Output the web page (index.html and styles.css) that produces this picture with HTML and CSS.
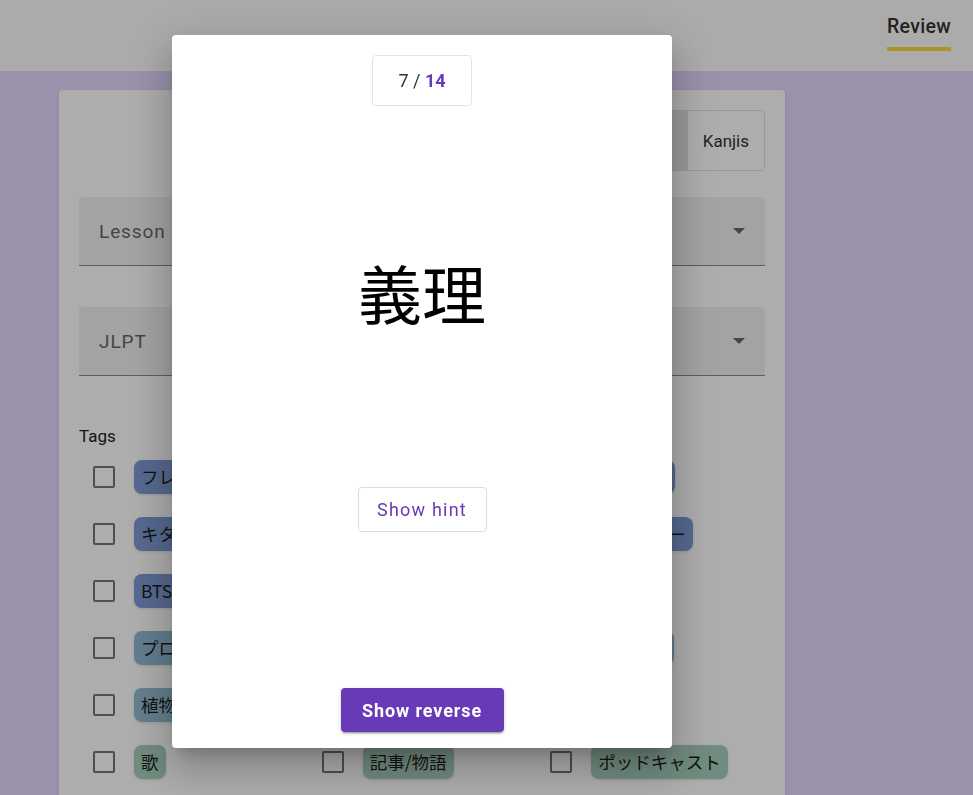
FILE: index.html
```html
<!DOCTYPE html>
<html lang="ja">
<head>
<meta charset="utf-8">
<title>Review</title>
<link rel="stylesheet" href="styles.css">
</head>
<body>
<header class="topbar">
  <nav class="tabs">
    <span class="tab active">Review</span>
  </nav>
</header>
<main class="page">
  <section class="card">
    <div class="toggle-row">
      <div class="toggle-group">
        <button class="toggle selected">Vocabulary</button>
        <button class="toggle">Kanjis</button>
      </div>
    </div>
    <div class="select first">
      <span class="select-label">Lesson</span>
      <span class="caret"></span>
    </div>
    <div class="select">
      <span class="select-label">JLPT</span>
      <span class="caret"></span>
    </div>
    <div class="tags-label">Tags</div>
    <div class="tags">
      <label class="tag"><span class="box"></span><span class="chip blue">フレーズ</span></label>
      <label class="tag"><span class="box"></span><span class="chip blue">食べ物</span></label>
      <label class="tag"><span class="box"></span><span class="chip blue">日常会話</span></label>
      <label class="tag"><span class="box"></span><span class="chip blue">キタニタツヤ</span></label>
      <label class="tag"><span class="box"></span><span class="chip blue">アニメ</span></label>
      <label class="tag"><span class="box"></span><span class="chip blue">カレンダー</span></label>
      <label class="tag"><span class="box"></span><span class="chip blue">BTS</span></label>
      <label class="tag"><span class="box"></span><span class="chip blue">旅行</span></label>
      <label class="tag"><span class="box"></span><span class="chip blue">天気</span></label>
      <label class="tag"><span class="box"></span><span class="chip teal">プログラミング</span></label>
      <label class="tag"><span class="box"></span><span class="chip teal">仕事</span></label>
      <label class="tag"><span class="box"></span><span class="chip teal">ニュース</span></label>
      <label class="tag"><span class="box"></span><span class="chip teal2">植物</span></label>
      <label class="tag"><span class="box"></span><span class="chip teal2">動物</span></label>
      <label class="tag"><span class="box"></span><span class="chip teal2">家族</span></label>
      <label class="tag"><span class="box"></span><span class="chip green">歌</span></label>
      <label class="tag"><span class="box"></span><span class="chip green">記事/物語</span></label>
      <label class="tag"><span class="box"></span><span class="chip green">ポッドキャスト</span></label>
    </div>
  </section>
</main>

<div class="backdrop"></div>
<div class="dialog" role="dialog">
  <div class="counter">7 / <strong>14</strong></div>
  <div class="word">義理</div>
  <button class="hint-btn">Show hint</button>
  <button class="reverse-btn">Show reverse</button>
</div>
</body>
</html>
```
FILE: styles.css
```css
* { box-sizing: border-box; }
html, body { margin: 0; height: 100%; }
body {
  font-family: Roboto, "Noto Sans CJK JP", sans-serif;
  background: #e3d6fd;
  color: #222;
  overflow: hidden;
}
.topbar {
  height: 71px;
  background: #fcfcfc;
  display: flex;
  justify-content: flex-end;
  padding-right: 22px;
}
.tabs { display: flex; }
.tab {
  font-size: 19.5px;
  font-weight: 500;
  color: #333;
  padding-top: 15px;
  height: 51px;
  border-bottom: 4px solid #fdd835;
  letter-spacing: 0.3px;
}
.page {
  padding: 19px 0 0 59px;
}
.card {
  width: 726px;
  background: #fff;
  border-radius: 4px;
  padding: 20px 20px 40px;
  min-height: 760px;
  box-shadow: 0 2px 1px -1px rgba(0,0,0,.2), 0 1px 1px rgba(0,0,0,.14), 0 1px 3px rgba(0,0,0,.12);
}
.toggle-row { display: flex; justify-content: flex-end; }
.toggle-group {
  display: flex;
  height: 61px;
  border: 1px solid rgba(0,0,0,.12);
  border-radius: 4px;
  overflow: hidden;
}
.toggle {
  border: 0;
  background: #fff;
  font: 400 17px Roboto, sans-serif;
  color: #333;
  padding: 0 15px;
}
.toggle + .toggle { border-left: 1px solid rgba(0,0,0,.12); }
.toggle.selected { background: #e4e4e4; }
.select {
  margin-top: 41px;
  height: 69px;
  background: #f0f0f0;
  border-radius: 4px 4px 0 0;
  border-bottom: 1px solid #8a8a8a;
  display: flex;
  align-items: center;
  justify-content: space-between;
  padding: 0 20px 0 20px;
}
.select.first { margin-top: 26px; }
.select-label {
  font-size: 19px;
  color: #666;
  letter-spacing: 0.9px;
}
.caret {
  width: 0; height: 0;
  border-left: 6px solid transparent;
  border-right: 6px solid transparent;
  border-top: 6px solid #666;
}
.tags-label {
  margin-top: 50px;
  font-size: 17px;
  line-height: 20px;
  color: #222;
}
.tags {
  margin-top: 2px;
  display: grid;
  grid-template-columns: repeat(3, 1fr);
  grid-auto-rows: 57px;
}
.tag {
  display: flex;
  align-items: center;
  padding-left: 14px;
  gap: 19px;
}
.box {
  width: 22px; height: 22px;
  border: 2px solid #757575;
  border-radius: 2px;
  flex: none;
}
.chip {
  font-family: "Noto Sans CJK JP", sans-serif;
  font-size: 17.5px;
  height: 34px;
  line-height: 34px;
  padding: 0 7px;
  border-radius: 8px;
  color: #1a1a1a;
  white-space: nowrap;
  box-shadow: 0 1px 3px rgba(0,0,0,.12);
}
.chip.blue { background: #7f9ad4; }
.chip.teal { background: #90b8d3; }
.chip.teal2 { background: #93bccd; }
.chip.green { background: #a6cdbb; }

.backdrop {
  position: fixed;
  inset: 0;
  background: rgba(0,0,0,.32);
}
.dialog {
  position: fixed;
  left: 172px;
  top: 35px;
  width: 500px;
  height: 713px;
  background: #fff;
  border-radius: 4px;
  box-shadow: 0 11px 15px -7px rgba(0,0,0,.2), 0 24px 38px 3px rgba(0,0,0,.14), 0 9px 46px 8px rgba(0,0,0,.12);
  display: flex;
  flex-direction: column;
  align-items: center;
  padding: 20px 0 16px;
}
.counter {
  width: 100px;
  height: 51px;
  border: 1px solid #e4e4e4;
  border-radius: 4px;
  display: flex;
  align-items: center;
  justify-content: center;
  font-size: 18px;
  color: #333;
  white-space: pre;
}
.counter strong { color: #673ab7; font-weight: 700; }
.word {
  margin-top: 153px;
  font-family: "Noto Sans CJK JP", sans-serif;
  font-size: 64px;
  line-height: 64px;
  color: #000;
}
.hint-btn {
  margin-top: 164px;
  width: 129px;
  height: 45px;
  background: #fff;
  border: 1px solid #dedede;
  border-radius: 4px;
  font: 400 18px Roboto, sans-serif;
  letter-spacing: 1.2px;
  color: #673ab7;
}
.reverse-btn {
  margin-top: auto;
  width: 163px;
  height: 44px;
  background: #673ab7;
  border: 0;
  border-radius: 4px;
  font: 700 18px Roboto, sans-serif;
  letter-spacing: 0.9px;
  color: #fff;
  box-shadow: 0 3px 1px -2px rgba(0,0,0,.2), 0 2px 2px rgba(0,0,0,.14), 0 1px 5px rgba(0,0,0,.12);
}
```
